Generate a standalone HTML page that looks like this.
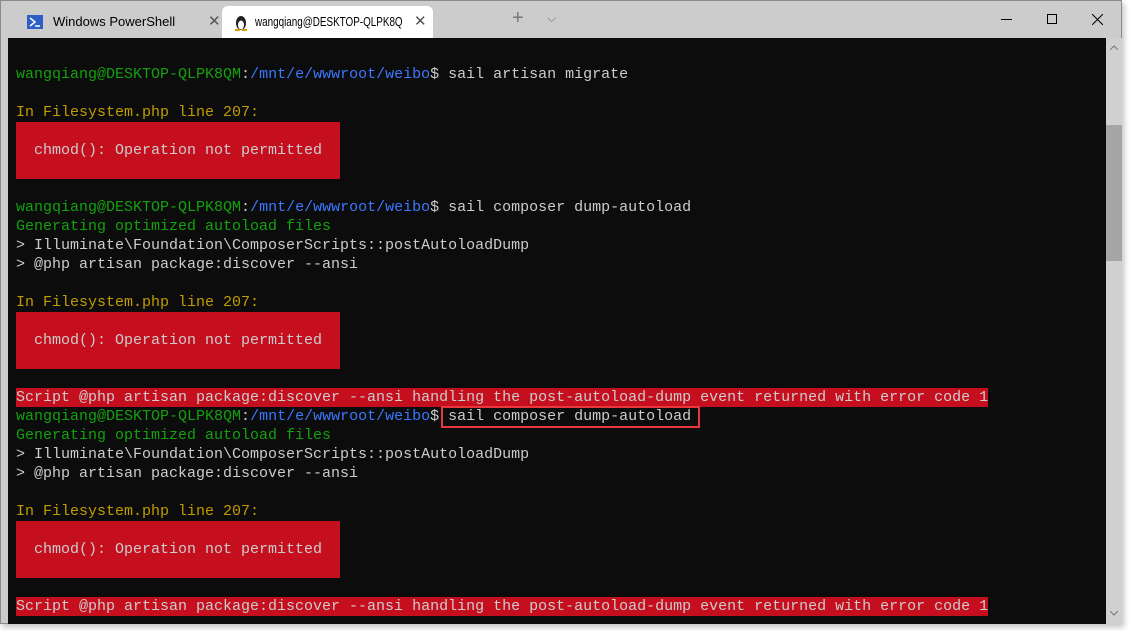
<!DOCTYPE html>
<html><head><meta charset="utf-8"><style>
*{margin:0;padding:0;box-sizing:border-box}
body{width:1129px;height:631px;background:#fff;position:relative;overflow:hidden;font-family:"Liberation Sans",sans-serif}
.win{position:absolute;left:0;top:0;width:1122px;height:624px;background:#cccccc;border:1px solid #8a8a8a;box-shadow:2px 3px 6px rgba(0,0,0,.25)}
.term{position:absolute;left:7px;top:37px;width:1098px;height:586px;background:#0c0c0c;font-family:"Liberation Mono",monospace;font-size:15px;color:#cccccc}
.r{position:absolute;left:8px;height:19px;line-height:19px;white-space:pre}
.g{color:#13a10e}.b{color:#3b78ff}.y{color:#c19c00}
.box{position:absolute;left:8px;width:324px;height:57px;background:#c50f1f}
.err{background:#c50f1f}
.sb{position:absolute;left:1105px;top:37px;width:16px;height:586px;background:#d0d0d0}
.tab{position:absolute;top:5px;height:32px;font-size:13px;line-height:32px;color:#000;white-space:nowrap}
</style></head><body>
<div class="win">
<div class="tab" style="left:7px;width:215px">
<svg style="position:absolute;left:19px;top:9px" width="16" height="14"><rect width="16" height="14" fill="#2d5fc7"/><path d="M3 3l5 4-5 4" stroke="#fff" stroke-width="1.5" fill="none"/><path d="M8 11h5" stroke="#fff" stroke-width="1.5"/></svg>
<span style="position:absolute;left:45px">Windows PowerShell</span>
<span style="position:absolute;left:200px;color:#555;font-size:15px">✕</span></div>
<div class="tab" style="left:221px;width:211px;background:#fff;border-radius:6px 6px 0 0">
<svg style="position:absolute;left:12px;top:7px" width="14" height="18"><ellipse cx="7" cy="10" rx="5" ry="7" fill="#222"/><ellipse cx="7" cy="12" rx="3" ry="4.5" fill="#fff"/><path d="M1 17h5M8 17h5" stroke="#d9a000" stroke-width="2"/></svg>
<span style="position:absolute;left:33px;font-size:12.5px;transform:scaleX(0.79);transform-origin:0 0">wangqiang@DESKTOP-QLPK8Q</span>
<span style="position:absolute;left:192px;color:#555;font-size:15px">✕</span></div>
<span style="position:absolute;left:511px;top:6px;font-size:20px;color:#777">+</span>
<span style="position:absolute;left:546px;top:10px;font-size:12px;color:#777">⌵</span>
<div style="position:absolute;left:1000px;top:18px;width:11px;height:1px;background:#000"></div>
<div style="position:absolute;left:1046px;top:13px;width:10px;height:10px;border:1px solid #000"></div>
<svg style="position:absolute;left:1091px;top:13px" width="11" height="11"><path d="M0 0L11 11M11 0L0 11" stroke="#000" stroke-width="1"/></svg>
<div class="term">
<div class="r" style="top:27px"><span class="g">wangqiang@DESKTOP-QLPK8QM</span>:<span class="b">/mnt/e/wwwroot/weibo</span>$ sail artisan migrate</div>
<div class="r y" style="top:65px">In Filesystem.php line 207:</div>
<div class="box" style="top:84px"></div>
<div class="r" style="top:103px">  chmod(): Operation not permitted</div>
<div class="r" style="top:160px"><span class="g">wangqiang@DESKTOP-QLPK8QM</span>:<span class="b">/mnt/e/wwwroot/weibo</span>$ sail composer dump-autoload</div>
<div class="r g" style="top:179px">Generating optimized autoload files</div>
<div class="r" style="top:198px">&gt; Illuminate\Foundation\ComposerScripts::postAutoloadDump</div>
<div class="r" style="top:217px">&gt; @php artisan package:discover --ansi</div>
<div class="r y" style="top:255px">In Filesystem.php line 207:</div>
<div class="box" style="top:274px"></div>
<div class="r" style="top:293px">  chmod(): Operation not permitted</div>
<div class="r err" style="top:350px">Script @php artisan package:discover --ansi handling the post-autoload-dump event returned with error code 1</div>
<div class="r" style="top:369px"><span class="g">wangqiang@DESKTOP-QLPK8QM</span>:<span class="b">/mnt/e/wwwroot/weibo</span>$ sail composer dump-autoload</div>
<div style="position:absolute;left:433px;top:368px;width:259px;height:22px;border:2px solid #e8383d"></div>
<div class="r g" style="top:388px">Generating optimized autoload files</div>
<div class="r" style="top:407px">&gt; Illuminate\Foundation\ComposerScripts::postAutoloadDump</div>
<div class="r" style="top:426px">&gt; @php artisan package:discover --ansi</div>
<div class="r y" style="top:464px">In Filesystem.php line 207:</div>
<div class="box" style="top:483px"></div>
<div class="r" style="top:502px">  chmod(): Operation not permitted</div>
<div class="r err" style="top:559px">Script @php artisan package:discover --ansi handling the post-autoload-dump event returned with error code 1</div>
</div>
<div class="sb"><div style="position:absolute;top:87px;left:0;width:16px;height:136px;background:#a6a6a6"></div>
<svg style="position:absolute;left:4px;top:7px" width="8" height="5"><path d="M0 5L4 1L8 5" stroke="#777" fill="none"/></svg>
<svg style="position:absolute;left:4px;top:573px" width="8" height="5"><path d="M0 0L4 4L8 0" stroke="#777" fill="none"/></svg></div>
</div>
</body></html>
